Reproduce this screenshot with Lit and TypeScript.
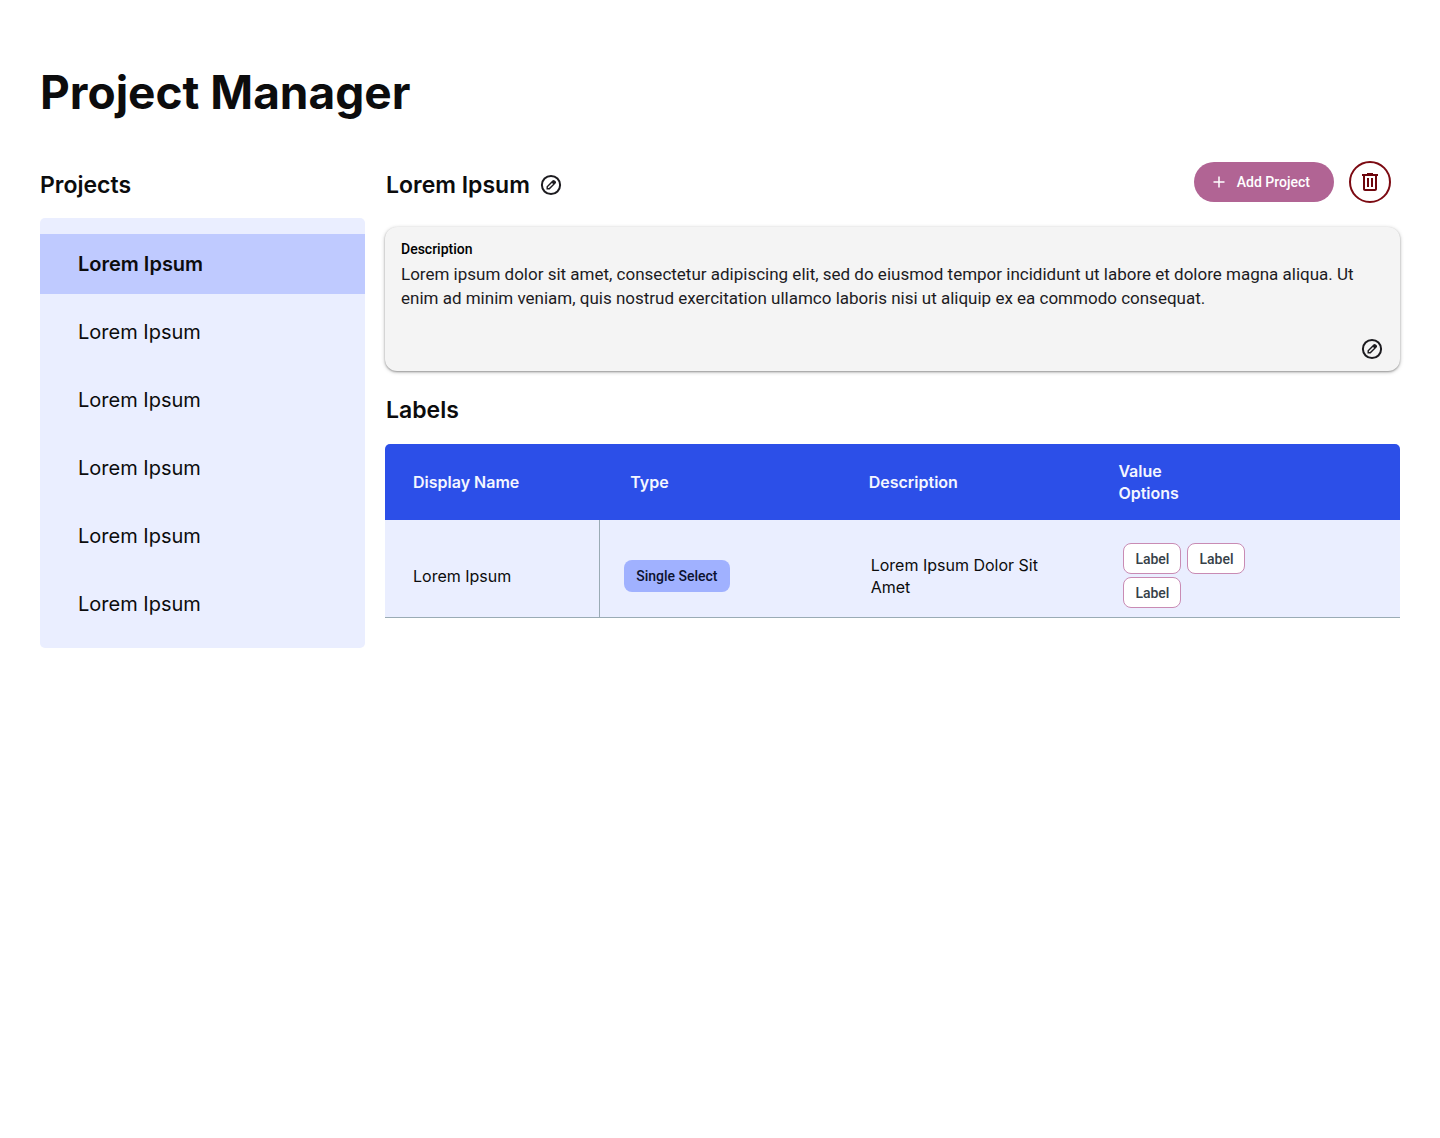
import { LitElement, html, css, svg } from "lit";
import { customElement, property, state } from "lit/decorators.js";
import { classMap } from "lit/directives/class-map.js";

interface LabelRow {
  name: string;
  type: string;
  description: string;
  options: string[];
}

const PROJECTS = Array.from({ length: 6 }, () => "Lorem Ipsum");

const LABELS: LabelRow[] = [
  {
    name: "Lorem Ipsum",
    type: "Single Select",
    description: "Lorem Ipsum Dolor Sit Amet",
    options: ["Label", "Label", "Label"],
  },
];

const editGlyph = svg`
  <circle cx="12" cy="12" r="9.1" fill="none" stroke="currentColor" stroke-width="2" />
  <path fill-rule="evenodd" fill="currentColor"
    d="M7.500 16.500v-3.100l5.900-5.900c.9-.8 1.700-.7 2.300-.1l.9.9c.6.6.7 1.400-.1 2.300l-5.900 5.900zM8.900 14v1.100H10l4.100-4.100-1.100-1.100z" />
`;

const trashGlyph = svg`
  <path fill-rule="evenodd" fill="currentColor"
    d="M9 3h6v1h5v2h-1v13c0 1.100-.9 2-2 2H7c-1.100 0-2-.9-2-2V6H4V4h5zM7 6v13h10V6zM9 8h2v9H9zM13 8h2v9h-2z" />
`;

@customElement("edit-button")
export class EditButton extends LitElement {
  @property() label = "Edit";

  static styles = css`
    :host {
      display: inline-flex;
    }
    .button {
      display: flex;
      padding: 0;
      border: 0;
      background: none;
      color: #1c1b1f;
      cursor: pointer;
    }
    .icon {
      width: 24px;
      height: 24px;
    }
  `;

  render() {
    return html`<button class="button" type="button" aria-label=${this.label}>
      <svg class="icon" viewBox="0 0 24 24" aria-hidden="true">${editGlyph}</svg>
    </button>`;
  }
}

@customElement("project-list")
export class ProjectList extends LitElement {
  @property({ attribute: false }) projects: string[] = [];
  @state() private selected = 0;

  static styles = css`
    :host {
      display: block;
    }
    .list {
      display: flex;
      flex-direction: column;
      gap: 8px;
      margin: 0;
      padding: 16px 0 14px;
      list-style: none;
      background: #eaeeff;
      border-radius: 5px;
    }
    .item {
      box-sizing: border-box;
      width: 100%;
      min-height: 60px;
      padding: 0 38px;
      border: 0;
      background: none;
      color: #0c0c0d;
      font: 400 20px/24px Inter, sans-serif;
      text-align: left;
      cursor: pointer;
    }
    .selected {
      background: #bfcaff;
      font-weight: 600;
    }
  `;

  render() {
    return html`<ul class="list">
      ${this.projects.map(
        (name, i) => html`<li>
          <button
            type="button"
            class=${classMap({ item: true, selected: i === this.selected })}
            @click=${() => (this.selected = i)}
          >${name}</button>
        </li>`
      )}
    </ul>`;
  }
}

@customElement("label-table")
export class LabelTable extends LitElement {
  @property({ attribute: false }) rows: LabelRow[] = [];

  static styles = css`
    :host {
      display: block;
    }
    .table {
      width: 100%;
      border-spacing: 0;
      table-layout: fixed;
      font: 400 16px/22px Inter, sans-serif;
      color: #0c0c0d;
    }
    .col-name {
      width: 21.2%;
    }
    .col-type {
      width: 23.5%;
    }
    .col-description {
      width: 24.6%;
    }
    .head {
      padding: 16px 30px;
      background: #2c4fe8;
      color: #f4f6ff;
      font-weight: 600;
      text-align: left;
    }
    .head:first-child {
      padding-left: 28px;
      border-top-left-radius: 5px;
    }
    .head:last-child {
      border-top-right-radius: 5px;
    }
    .wrap {
      display: block;
      max-width: 80px;
    }
    .cell {
      padding: 23px 32px 9px;
      background: #eaeeff;
      border-bottom: 1px solid #9aabb5;
    }
    .name {
      padding-left: 28px;
      border-right: 1px solid #9aabb5;
    }
    .type {
      padding-left: 24px;
    }
    .options {
      padding-left: 35px;
    }
    .head,
    .cell {
      vertical-align: middle;
    }
    .chip,
    .tag {
      display: inline-flex;
      align-items: center;
      box-sizing: border-box;
      padding: 0 12px;
      border-radius: 8px;
      font: 500 14px/20px Roboto, sans-serif;
    }
    .chip {
      height: 32px;
      background: #a0b1ff;
      color: #0c1230;
    }
    .tags {
      display: flex;
      flex-wrap: wrap;
      gap: 3px 6px;
      max-width: 160px;
      margin: 0;
      padding: 0;
      list-style: none;
    }
    .tag {
      height: 31px;
      padding: 0 11px;
      border: 1px solid #c98bb4;
      background: #fff;
      color: #364048;
    }
  `;

  render() {
    return html`<table class="table">
      <colgroup>
        <col class="col-name" />
        <col class="col-type" />
        <col class="col-description" />
        <col />
      </colgroup>
      <thead>
        <tr>
          <th class="head" scope="col">Display Name</th>
          <th class="head" scope="col">Type</th>
          <th class="head" scope="col">Description</th>
          <th class="head" scope="col"><span class="wrap">Value Options</span></th>
        </tr>
      </thead>
      <tbody>
        ${this.rows.map(
          (row) => html`<tr>
            <td class="cell name">${row.name}</td>
            <td class="cell type"><span class="chip">${row.type}</span></td>
            <td class="cell">${row.description}</td>
            <td class="cell options">
              <ul class="tags">
                ${row.options.map((o) => html`<li class="tag">${o}</li>`)}
              </ul>
            </td>
          </tr>`
        )}
      </tbody>
    </table>`;
  }
}

@customElement("app-root")
export class AppRoot extends LitElement {
  static styles = css`
    :host {
      display: block;
      min-height: 100vh;
      box-sizing: border-box;
      padding: 62px 40px 40px;
      background: #fff;
      color: #0c0c0d;
      font-family: Inter, sans-serif;
    }
    .title {
      margin: 0 0 39px;
      font-size: 46px;
      line-height: 60px;
      font-weight: 700;
    }
    .layout {
      display: grid;
      grid-template-columns: minmax(200px, 325px) minmax(0, 1fr);
      gap: 20px;
      align-items: start;
    }
    .heading {
      margin: 0;
      font-size: 23px;
      line-height: 32px;
      font-weight: 600;
    }
    .bar {
      display: flex;
      align-items: center;
      gap: 8px;
      min-height: 42px;
    }
    .side .bar {
      margin-bottom: 15px;
    }
    .top {
      justify-content: space-between;
      padding: 0 9px 0 1px;
      margin-bottom: 24px;
    }
    .group {
      display: flex;
      align-items: center;
      gap: 9px;
    }
    .actions {
      gap: 15px;
    }
    .name-line {
      padding-top: 5px;
    }
    .add {
      display: flex;
      align-items: center;
      gap: 9px;
      height: 40px;
      padding: 0 24px 0 16px;
      border: 0;
      border-radius: 20px;
      background: #b16494;
      color: #fff;
      font: 500 14px/20px Roboto, sans-serif;
      cursor: pointer;
    }
    .plus {
      width: 18px;
      height: 18px;
    }
    .delete {
      display: flex;
      align-items: center;
      justify-content: center;
      width: 42px;
      height: 42px;
      padding: 0;
      border: 2px solid #7c0a12;
      border-radius: 50%;
      background: #fff;
      color: #6f060d;
      cursor: pointer;
    }
    .bin {
      width: 24px;
      height: 24px;
    }
    .card {
      display: flex;
      flex-direction: column;
      padding: 12px 16px 10px;
      border-radius: 12px;
      background: #f4f4f4;
      box-shadow: 0 1px 2px rgba(0, 0, 0, 0.3), 0 1px 4px rgba(0, 0, 0, 0.22);
      font-family: Roboto, sans-serif;
    }
    .card-title {
      margin: 0 0 3px;
      font-size: 14px;
      line-height: 20px;
      font-weight: 500;
      color: #000;
    }
    .text {
      margin: 0 0 27px;
      font-size: 17px;
      line-height: 24px;
      color: #1c1b1f;
    }
    .card-edit {
      align-self: flex-end;
    }
    .labels {
      padding: 0 1px;
      margin: 23px 0 18px;
    }
  `;

  render() {
    return html`
      <h1 class="title">Project Manager</h1>
      <div class="layout">
        <aside class="side">
          <div class="bar">
            <h2 class="heading name-line">Projects</h2>
          </div>
          <project-list .projects=${PROJECTS}></project-list>
        </aside>
        <main>
          <div class="bar top">
            <div class="group name-line">
              <h2 class="heading">Lorem Ipsum</h2>
              <edit-button label="Edit project name"></edit-button>
            </div>
            <div class="group actions">
              <button class="add" type="button">
                <svg class="plus" viewBox="0 0 18 18" aria-hidden="true">
                  <path d="M9 3.500v11M3.500 9h11" stroke="currentColor" stroke-width="1.500" />
                </svg>
                Add Project
              </button>
              <button class="delete" type="button" aria-label="Delete project">
                <svg class="bin" viewBox="0 0 24 24" aria-hidden="true">${trashGlyph}</svg>
              </button>
            </div>
          </div>
          <section class="card">
            <h3 class="card-title">Description</h3>
            <p class="text">
              Lorem ipsum dolor sit amet, consectetur adipiscing elit, sed do eiusmod tempor
              incididunt ut labore et dolore magna aliqua. Ut enim ad minim veniam, quis nostrud
              exercitation ullamco laboris nisi ut aliquip ex ea commodo consequat.
            </p>
            <edit-button class="card-edit" label="Edit description"></edit-button>
          </section>
          <h2 class="heading labels">Labels</h2>
          <label-table .rows=${LABELS}></label-table>
        </main>
      </div>
    `;
  }
}
